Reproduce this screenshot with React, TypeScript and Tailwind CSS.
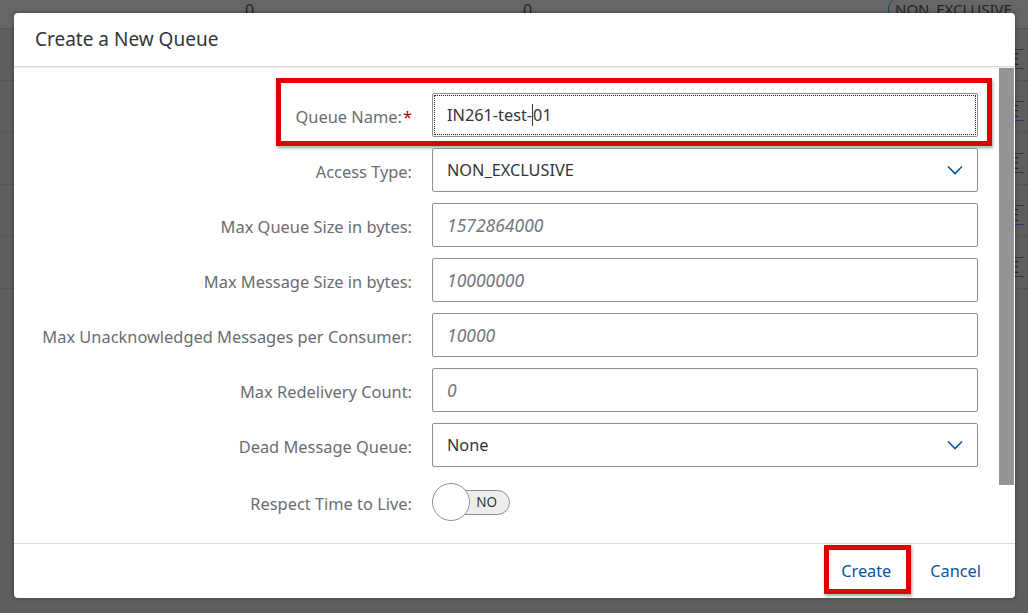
import React from "react";

const font = { fontFamily: '"Noto Sans", "Liberation Sans", sans-serif' };

function Chevron() {
  return (
    <svg width="16" height="10" viewBox="0 0 16 10" className="text-[#0854a0]">
      <path d="M1 1.5 L8 8.5 L15 1.5" fill="none" stroke="currentColor" strokeWidth="1.6" />
    </svg>
  );
}

function Row({ label, children, required }: { label: string; children: React.ReactNode; required?: boolean }) {
  return (
    <div className="flex items-center h-[44px]">
      <div className="w-[418px] text-right text-[16.4px] text-[#6a6d70] pr-[20px] pt-[5px]">
        {label}
        {required && <span className="text-[#bb0000] ml-[1px]">*</span>}
      </div>
      <div className="w-[546px]">{children}</div>
    </div>
  );
}

function Field({ value, placeholder, select, focus }: { value?: string; placeholder?: string; select?: boolean; focus?: boolean }) {
  return (
    <div className="relative h-[44px] flex items-center justify-between pl-[14px] pr-[14px] bg-white rounded-[2px] border border-[#89919a]">
      {focus && <div className="absolute inset-[1px] border border-dotted border-[#222]" />}
      {value ? (
        <span className="text-[16.3px] text-[#32363a]">
          {focus ? (
            <>
              IN261-test-<span className="border-l border-[#32363a]">01</span>
            </>
          ) : (
            value
          )}
        </span>
      ) : (
        <span className="text-[17.5px] italic text-[#74777a]">{placeholder}</span>
      )}
      {select && <Chevron />}
    </div>
  );
}

export default function App() {
  return (
    <div className="relative w-[1028px] h-[613px] bg-[#5e5e5e] overflow-hidden" style={font}>
      {/* dimmed page behind */}
      <div className="flex flex-col">
        <div className="h-[29px] bg-[#666] border-b border-[#555] relative">
          <span className="absolute left-[245px] top-[-2px] text-[16px] text-[#222]">0</span>
          <span className="absolute left-[523px] top-[-2px] text-[16px] text-[#222]">0</span>
          <span className="absolute left-[888px] top-[-2px] h-[22px] pl-[6px] rounded-l-full border-l border-[#1d3d5f] text-[15px] text-[#222]">NON_EXCLUSIVE</span>
        </div>
        {[0, 1, 2, 3, 4].map((i) => (
          <div key={i} className="h-[52px] border-b border-[#555] relative">
            <span className="absolute right-[4px] top-[20px] h-[20px] w-[14px] border-y border-[#1d3d5f] text-[16px] leading-[18px] text-[#222]">E</span>
          </div>
        ))}
      </div>

      {/* dialog */}
      <div className="absolute left-[14px] top-[13px] w-[1001px] h-[585px] bg-white rounded-[4px] shadow-[0_0_4px_rgba(0,0,0,0.4)] flex flex-col overflow-hidden">
        <div className="h-[54px] flex items-center px-[21px] text-[19px] text-[#32363a] border-b border-[#d9d9d9] shadow-[0_1px_2px_rgba(0,0,0,0.08)]">
          Create a New Queue
        </div>
        <div className="flex-1 relative flex">
          <div className="flex-1 flex flex-col gap-[11px] pt-[26px]">
            <div className="relative">
              <div className="absolute left-[262px] top-[-15px] w-[716px] h-[68px] border-[5px] border-[#e00000] shadow-[1px_2px_3px_rgba(0,0,0,0.35)]" />
              <Row label="Queue Name:" required>
                <Field value="IN261-test-01" focus />
              </Row>
            </div>
            <Row label="Access Type:">
              <Field value="NON_EXCLUSIVE" select />
            </Row>
            <Row label="Max Queue Size in bytes:">
              <Field placeholder="1572864000" />
            </Row>
            <Row label="Max Message Size in bytes:">
              <Field placeholder="10000000" />
            </Row>
            <Row label="Max Unacknowledged Messages per Consumer:">
              <Field placeholder="10000" />
            </Row>
            <Row label="Max Redelivery Count:">
              <Field placeholder="0" />
            </Row>
            <Row label="Dead Message Queue:">
              <Field value="None" select />
            </Row>
            <div className="flex items-center h-[40px] mt-[4px]">
              <div className="w-[418px] text-right text-[16.4px] text-[#6a6d70] pr-[20px] pt-[4px]">Respect Time to Live:</div>
              <div className="relative w-[80px] h-[38px] flex items-center">
                <div className="absolute left-[12px] w-[66px] h-[25px] rounded-full bg-[#ededed] border border-[#89919a] flex items-center justify-end pr-[12px] text-[13.5px] text-[#32363a]">
                  NO
                </div>
                <div className="absolute left-0 w-[38px] h-[38px] rounded-full bg-white border border-[#89919a]" />
              </div>
            </div>
          </div>
          <div className="w-[15px] h-[417px] bg-[#949494] mt-[1px] mr-[1px]" />
        </div>
        <div className="h-[55px] border-t border-[#d9d9d9] flex items-center justify-end gap-[39px] pr-[34px]">
          <div className="relative text-[16.3px] text-[#0854a0] pt-[1px]">
            <div className="absolute left-[-17px] top-[-13px] w-[87px] h-[49px] border-[5px] border-[#e00000] shadow-[1px_2px_3px_rgba(0,0,0,0.35)]" />
            Create
          </div>
          <div className="text-[16.3px] text-[#0854a0] pt-[1px]">Cancel</div>
        </div>
      </div>
    </div>
  );
}
